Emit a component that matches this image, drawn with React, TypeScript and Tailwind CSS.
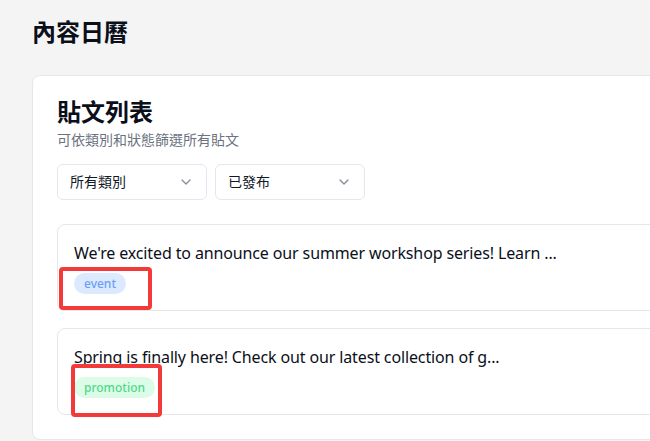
import { ChevronDown } from "lucide-react";

const posts = [
  {
    text: "We're excited to announce our summer workshop series! Learn ...",
    tag: "event",
    tagClass: "bg-[#dbeafe] text-[#6b9ef5]",
  },
  {
    text: "Spring is finally here! Check out our latest collection of g...",
    tag: "promotion",
    tagClass: "bg-[#dcfce7] text-[#4fd98a]",
  },
];

function FilterSelect({ label }: { label: string }) {
  return (
    <button className="flex h-9 w-[150px] items-center justify-between rounded-md border border-[#e2e8f0] bg-white px-3 text-sm text-[#111827]">
      <span>{label}</span>
      <ChevronDown className="h-4 w-4 text-[#6b7280] opacity-80" />
    </button>
  );
}

export default function App() {
  return (
    <div
      className="relative h-[441px] w-[650px] overflow-hidden bg-[#f4f4f4] pl-8 pt-4"
      style={{ fontFamily: '"Noto Sans", "Noto Sans CJK TC", sans-serif' }}
    >
      <h1 className="text-2xl leading-8 font-bold text-[#0b0f1a]">內容日曆</h1>

      <div className="mt-[27px] w-[720px] rounded-lg border border-[#e5e7eb] bg-white p-6">
        <h2 className="text-2xl leading-none font-semibold text-[#0b0f1a]">貼文列表</h2>
        <p className="mt-1.5 text-sm leading-5 text-[#6b7280]">可依類別和狀態篩選所有貼文</p>

        <div className="mt-3.5 flex gap-2">
          <FilterSelect label="所有類別" />
          <FilterSelect label="已發布" />
        </div>

        <div className="mt-6 flex flex-col gap-[17px]">
          {posts.map((p) => (
            <div key={p.tag} className="rounded-lg border border-[#e5e7eb] bg-white p-4">
              <p className="text-base leading-6 tracking-[-0.13px] text-[#0b0f1a]">{p.text}</p>
              <span
                className={`mt-2 inline-flex rounded-full px-2.5 py-0.5 text-xs leading-[17px] font-medium ${p.tagClass}`}
              >
                {p.tag}
              </span>
            </div>
          ))}
        </div>
      </div>

      {/* annotation boxes */}
      <div className="absolute left-[59px] top-[267px] h-[43px] w-[93px] rounded-[4px] border-[4px] border-[#f23a3a]" />
      <div className="absolute left-[71px] top-[364px] h-[53px] w-[91px] rounded-[4px] border-[4px] border-[#f23a3a]" />
    </div>
  );
}
